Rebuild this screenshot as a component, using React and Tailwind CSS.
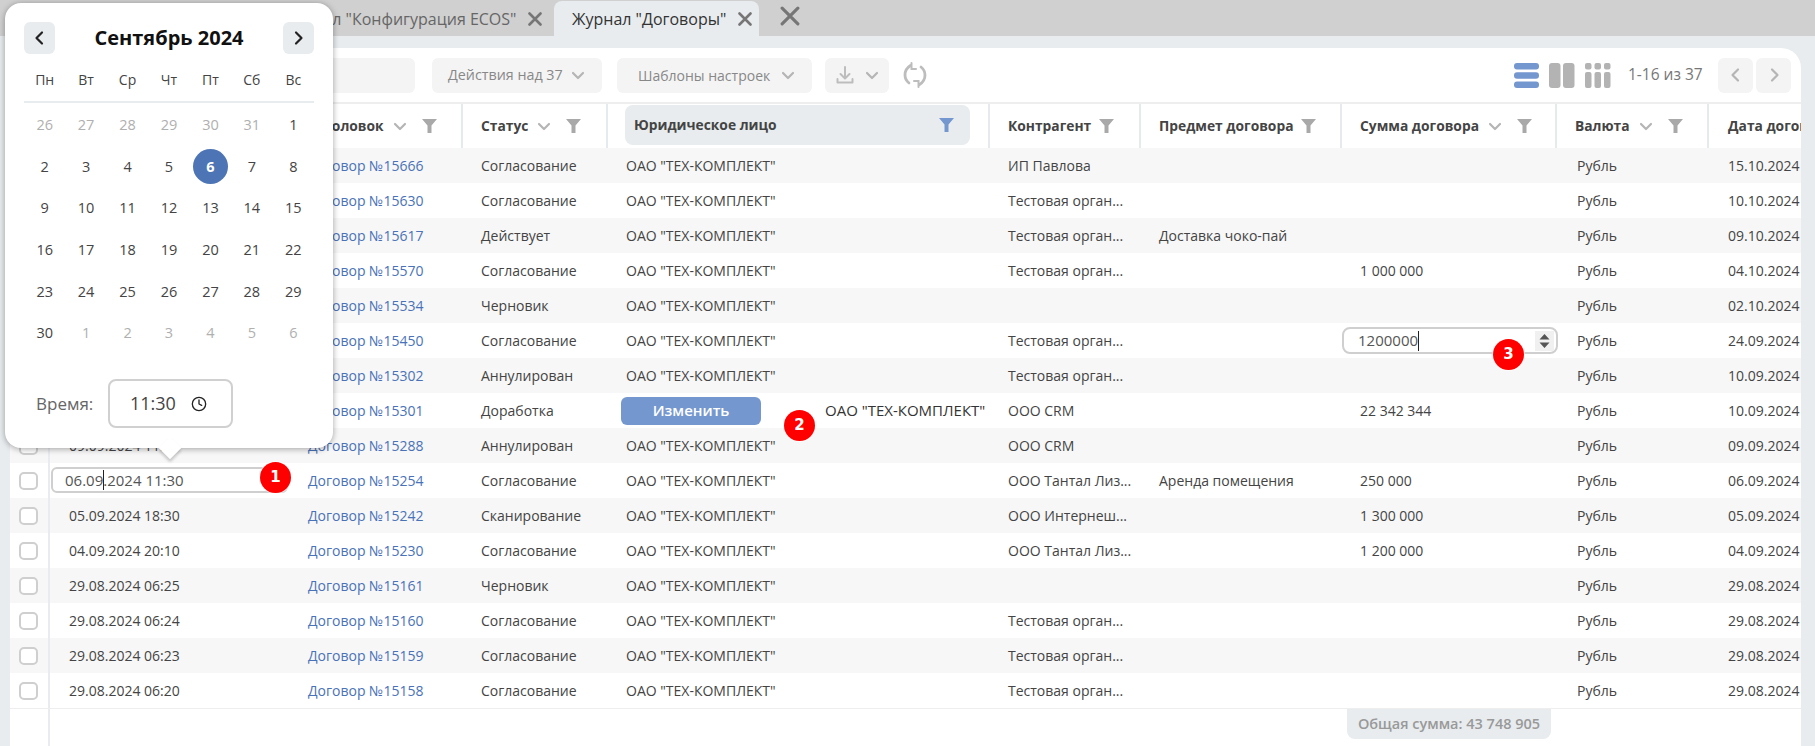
import { Clock } from 'lucide-react';

const COLS = 'grid grid-cols-[40px_238px_173px_145px_382px_151px_201px_215px_152px_1fr]';

const ROWS = [
  { date: '15.10.2024 10:42', no: '15666', status: 'Согласование', agent: 'ИП Павлова', topic: '', sum: '', end: '15.10.2024' },
  { date: '10.10.2024 12:05', no: '15630', status: 'Согласование', agent: 'Тестовая орган...', topic: '', sum: '', end: '10.10.2024' },
  { date: '09.10.2024 16:20', no: '15617', status: 'Действует', agent: 'Тестовая орган...', topic: 'Доставка чоко-пай', sum: '', end: '09.10.2024' },
  { date: '04.10.2024 09:15', no: '15570', status: 'Согласование', agent: 'Тестовая орган...', topic: '', sum: '1 000 000', end: '04.10.2024' },
  { date: '02.10.2024 14:30', no: '15534', status: 'Черновик', agent: '', topic: '', sum: '', end: '02.10.2024' },
  { date: '24.09.2024 11:10', no: '15450', status: 'Согласование', agent: 'Тестовая орган...', topic: '', sum: 'edit', end: '24.09.2024' },
  { date: '10.09.2024 17:45', no: '15302', status: 'Аннулирован', agent: 'Тестовая орган...', topic: '', sum: '', end: '10.09.2024' },
  { date: '10.09.2024 13:25', no: '15301', status: 'Доработка', agent: 'ООО CRM', topic: '', sum: '22 342 344', end: '10.09.2024', change: true },
  { date: '09.09.2024 11:00', no: '15288', status: 'Аннулирован', agent: 'ООО CRM', topic: '', sum: '', end: '09.09.2024' },
  { date: 'edit', no: '15254', status: 'Согласование', agent: 'ООО Тантал Лиз...', topic: 'Аренда помещения', sum: '250 000', end: '06.09.2024' },
  { date: '05.09.2024 18:30', no: '15242', status: 'Сканирование', agent: 'ООО Интернеш...', topic: '', sum: '1 300 000', end: '05.09.2024' },
  { date: '04.09.2024 20:10', no: '15230', status: 'Согласование', agent: 'ООО Тантал Лиз...', topic: '', sum: '1 200 000', end: '04.09.2024' },
  { date: '29.08.2024 06:25', no: '15161', status: 'Черновик', agent: '', topic: '', sum: '', end: '29.08.2024' },
  { date: '29.08.2024 06:24', no: '15160', status: 'Согласование', agent: 'Тестовая орган...', topic: '', sum: '', end: '29.08.2024' },
  { date: '29.08.2024 06:23', no: '15159', status: 'Согласование', agent: 'Тестовая орган...', topic: '', sum: '', end: '29.08.2024' },
  { date: '29.08.2024 06:20', no: '15158', status: 'Согласование', agent: 'Тестовая орган...', topic: '', sum: '', end: '29.08.2024' },
];

const WEEKS = [
  [26, 27, 28, 29, 30, 31, 1],
  [2, 3, 4, 5, 6, 7, 8],
  [9, 10, 11, 12, 13, 14, 15],
  [16, 17, 18, 19, 20, 21, 22],
  [23, 24, 25, 26, 27, 28, 29],
  [30, 1, 2, 3, 4, 5, 6],
];

function Chevron({ className = '', size = 16, color = '#b5b5b5', dir = 'down' }) {
  const d = { down: 'M3 6l5 5 5-5', left: 'M10 2.5L4.5 8l5.5 5.5', right: 'M6 2.5L11.5 8 6 13.5' }[dir];
  return (
    <svg width={size} height={size} viewBox="0 0 16 16" fill="none" className={className}>
      <path d={d} stroke={color} strokeWidth="2.2" strokeLinecap="round" strokeLinejoin="round" />
    </svg>
  );
}

function Funnel({ color = '#a9a9a9', className = '' }) {
  return (
    <svg width="15" height="14" viewBox="0 0 15 14" className={className}>
      <path d="M0 0h15L9.5 6.5V14h-4V6.5z" fill={color} />
    </svg>
  );
}

function Cross({ size = 14, width = 2.6, color = '#767676' }) {
  return (
    <svg width={size} height={size} viewBox="0 0 14 14" fill="none">
      <path d="M1.5 1.5l11 11M12.5 1.5l-11 11" stroke={color} strokeWidth={width} strokeLinecap="round" />
    </svg>
  );
}

function Badge({ n, className }) {
  return (
    <span className={`absolute z-10 flex h-[31px] w-[31px] items-center justify-center rounded-full bg-[#f00] font-['DejaVu_Sans',sans-serif] text-[15px] font-bold text-white shadow-[0_0_0_1px_rgba(255,255,255,0.5)] ${className}`}>
      {n}
    </span>
  );
}

function HeadCell({ label, sort = true, funnel = true, first = false }) {
  return (
    <div className={`flex h-[44px] items-center whitespace-nowrap pl-[18px] text-[13.8px] font-bold text-[#444] ${first ? '' : 'border-l-2 border-[#e4eaee]'}`}>
      <span>{label}</span>
      {sort && <Chevron className="ml-2" />}
      {funnel && <Funnel className={sort ? 'ml-[14px]' : 'ml-2'} />}
    </div>
  );
}

function Row({ row, index }) {
  const bg = index % 2 === 0 ? 'bg-[#f7f7f7]' : 'bg-white';
  return (
    <div className={`${COLS} h-[35px] items-center text-[14px] text-[#444] ${bg}`}>
      <div className="flex h-full items-center border-r-2 border-[#e8ecef] pl-[9px]">
        <span className="h-[18px] w-[19px] rounded-[5px] border-2 border-[#cfcfcf] bg-white" />
      </div>
      {row.date === 'edit' ? (
        <div className="relative h-full">
          <div className="mt-[4px] ml-px flex h-[26px] w-[237px] items-center rounded-md border-2 border-[#cfcfcf] bg-white pl-[12px] text-[15px] text-[#555]">
            06.09<span className="mx-[-0.5px] h-[20px] w-px bg-[#222]" />.2024 11:30
          </div>
          <Badge n="1" className="left-[210px] top-[-1px]" />
        </div>
      ) : (
        <div className="pl-[19px]">{row.date}</div>
      )}
      <div className="pl-5 text-[#4a72b8]">Договор №{row.no}</div>
      <div className="pl-5 whitespace-nowrap">{row.status}</div>
      {row.change ? (
        <div className="relative flex h-full items-center pl-[15px]">
          <button className="h-[28px] w-[140px] rounded-md bg-[#7597cf] text-[15px] font-semibold text-white">Изменить</button>
          <span className="ml-[64px] mt-[-1px] whitespace-nowrap text-[15px] text-[#333]">ОАО "ТЕХ-КОМПЛЕКТ"</span>
          <Badge n="2" className="left-[178px] top-[17px]" />
        </div>
      ) : (
        <div className="pl-5">ОАО "ТЕХ-КОМПЛЕКТ"</div>
      )}
      <div className="pl-5 whitespace-nowrap">{row.agent}</div>
      <div className="pl-5 whitespace-nowrap">{row.topic}</div>
      {row.sum === 'edit' ? (
        <div className="relative h-full">
          <div className="mt-[4px] ml-[2px] flex h-[27px] w-[216px] items-center justify-between rounded-lg border-2 border-[#cfcfcf] bg-white pl-[14px] pr-[2px] text-[15px] text-[#555]">
            <span className="flex items-center">1200000<span className="h-[20px] w-px bg-[#222]" /></span>
            <svg width="19" height="20" viewBox="0 0 19 20" className="bg-[#f0f0f0]">
              <path d="M9.5 3l5 5.5h-10zM9.5 17l5-5.5h-10z" fill="#555" />
            </svg>
          </div>
          <Badge n="3" className="left-[153px] top-[16px]" />
        </div>
      ) : (
        <div className="pl-5">{row.sum}</div>
      )}
      <div className="pl-[22px]">Рубль</div>
      <div className="overflow-hidden pl-[21px] whitespace-nowrap">{row.end}</div>
    </div>
  );
}

function Calendar() {
  return (
    <div className="absolute left-[5px] top-[3px] z-20 h-[445px] w-[328px] rounded-2xl bg-white px-[19px] pt-[19px] shadow-[0_1px_6px_rgba(0,0,0,0.35)]">
      <div className="flex items-center justify-between">
        <button className="flex h-[32px] w-[31px] items-center justify-center rounded-md bg-[#e8ecef]">
          <Chevron dir="left" color="#222" />
        </button>
        <span className="text-[20px] font-bold text-[#111]">Сентябрь 2024</span>
        <button className="flex h-[32px] w-[31px] items-center justify-center rounded-md bg-[#e8ecef]">
          <Chevron dir="right" color="#222" />
        </button>
      </div>
      <div className="mt-[16px] grid h-[33px] grid-cols-7 border-b-2 border-[#e8ecef] pb-[8px] text-center text-[14px] leading-[20px] text-[#444]">
        {['Пн', 'Вт', 'Ср', 'Чт', 'Пт', 'Сб', 'Вс'].map(d => <span key={d}>{d}</span>)}
      </div>
      <div className="mt-[1px]">
        {WEEKS.map((week, w) => (
          <div key={w} className="grid h-[41.7px] grid-cols-7 place-items-center text-[14.5px] text-[#444]">
            {week.map((d, i) => {
              const muted = (w === 0 && d > 1) || (w === 5 && d < 30);
              if (w === 1 && d === 6) {
                return <span key={i} className="flex h-[35px] w-[35px] items-center justify-center rounded-full bg-[#4d74b5] font-bold text-white">{d}</span>;
              }
              return <span key={i} className={muted ? 'text-[#b0b0b0]' : ''}>{d}</span>;
            })}
          </div>
        ))}
      </div>
      <div className="mt-[25px] flex items-center pl-[12px]">
        <span className="w-[72px] text-[17px] text-[#666]">Время:</span>
        <div className="flex h-[49px] w-[125px] items-center rounded-lg border-2 border-[#d0d0d0] pl-[20px] text-[18px] text-[#444]">
          11:30
          <Clock size={16} strokeWidth={2} color="#222" className="ml-[15px]" />
        </div>
      </div>
      {/* хвостик */}
      <div className="absolute bottom-[-8px] left-[157px] h-[16px] w-[16px] rotate-45 bg-white shadow-[2px_2px_3px_rgba(0,0,0,0.2)]" />
    </div>
  );
}

function Toolbar() {
  return (
    <div className="flex h-[56px] items-center border-b-2 border-[#eeeeee] pl-[40px] pr-[10px] text-[14px] text-[#888]">
      <div className="h-[35px] w-[365px] rounded-md bg-[#f4f4f4]" />
      <div className="ml-[17px] flex h-[35px] w-[170px] items-center rounded-md bg-[#f4f4f4] pl-[16px] text-[14.3px]">
        Действия над 37
        <Chevron className="ml-[7px]" />
      </div>
      <div className="ml-[15px] flex h-[35px] w-[195px] items-center rounded-md bg-[#f4f4f4] pl-[21px]">
        Шаблоны настроек
        <Chevron className="ml-[10px]" />
      </div>
      <div className="ml-[13px] flex h-[35px] w-[64px] items-center rounded-md bg-[#f4f4f4] pl-[10px]">
        <svg width="20" height="20" viewBox="0 0 20 20" fill="none" stroke="#bdbdbd" strokeWidth="2" strokeLinecap="round" strokeLinejoin="round">
          <path d="M10 2v11M5.500 9l4.500 4.500L14.500 9M2.500 14v3.500h15V14" />
        </svg>
        <Chevron className="ml-[9px]" />
      </div>
      <svg width="26" height="26" viewBox="0 0 26 26" fill="none" className="ml-[13px]" stroke="#bdbdbd" strokeWidth="2.800" strokeLinecap="round">
        <path d="M8.500 3.500C4.500 6 3 9.500 3 13c0 3.500 1.500 6 4 8" />
        <path d="M17.500 22.500c4-2.500 5.500-6 5.500-9.500 0-3.500-1.500-6-4-8" />
        <path d="M9.500 1v6H14M16.500 25v-6H12" strokeWidth="2" />
      </svg>

      <div className="ml-auto flex items-center">
        <svg width="25" height="25" viewBox="0 0 25 25" fill="#7597cf">
          <rect width="25" height="6.500" rx="3" />
          <rect y="9.300" width="25" height="6.500" rx="3" />
          <rect y="18.500" width="25" height="6.500" rx="3" />
        </svg>
        <svg width="26" height="25" viewBox="0 0 26 25" fill="#b3b3b3" className="ml-[10px]">
          <rect width="11.500" height="25" rx="3" />
          <rect x="14" width="11.500" height="25" rx="3" />
        </svg>
        <svg width="26" height="25" viewBox="0 0 26 25" fill="#b3b3b3" className="ml-[10px]">
          <rect width="6.500" height="6.500" rx="2" />
          <rect x="9.500" width="6.500" height="6.500" rx="2" />
          <rect x="19" width="6.500" height="6.500" rx="2" />
          <rect y="9" width="6.500" height="16" rx="2" />
          <rect x="9.500" y="9" width="6.500" height="16" rx="2" />
          <rect x="19" y="9" width="6.500" height="16" rx="2" />
        </svg>
        <span className="ml-[17px] w-[90px] text-[15.500px] text-[#777]">1-16 из 37</span>
        <button className="flex h-[35px] w-[35px] items-center justify-center rounded-md bg-[#f4f4f4]">
          <Chevron dir="left" />
        </button>
        <button className="ml-[3px] flex h-[35px] w-[35px] items-center justify-center rounded-md bg-[#f4f4f4]">
          <Chevron dir="right" />
        </button>
      </div>
    </div>
  );
}

export default function App() {
  return (
    <div className="relative h-[746px] w-[1815px] overflow-hidden bg-[#e8ecef] font-['Open_Sans',sans-serif]">
      {/* Tabs */}
      <div className="flex h-[36px] items-end bg-[#d0d0d0] pl-[282px] text-[16px]">
        <div className="flex h-[35px] w-[272px] items-center text-[#666]">
          <span className="whitespace-nowrap">Журнал "Конфигурация ECOS"</span>
          <span className="ml-[12px]"><Cross /></span>
        </div>
        <div className="flex h-[35px] w-[205px] items-center rounded-t-lg bg-[#e8ecef] pl-[18px] text-[#333]">
          <span className="whitespace-nowrap">Журнал "Договоры"</span>
          <span className="ml-[12px]"><Cross /></span>
        </div>
        <span className="mb-[10px] ml-[21px]"><Cross size={20} width={2.2} /></span>
      </div>

      {/* Card */}
      <div className="ml-[10px] mt-[12px] h-[698px] w-[1791px] overflow-hidden rounded-tr-[20px] rounded-tl-[20px] bg-white">
        <Toolbar />
        <div className={COLS}>
          <div className="border-r-2 border-[#e8ecef]" />
          <HeadCell label="Дата создания" first />
          <HeadCell label="Заголовок" />
          <HeadCell label="Статус" />
          <div className="flex h-[44px] items-start border-l-2 border-[#e4eaee] pl-[17px] pt-px">
            <div className="flex h-[40px] w-[345px] items-center justify-between rounded-lg bg-[#e8ecef] pl-[9px] pr-[16px] text-[13.8px] font-bold text-[#444]">
              Юридическое лицо
              <Funnel color="#7597cf" />
            </div>
          </div>
          <HeadCell label="Контрагент" sort={false} />
          <HeadCell label="Предмет договора" sort={false} />
          <HeadCell label="Сумма договора" />
          <HeadCell label="Валюта" />
          <div className="flex h-[44px] items-center overflow-hidden whitespace-nowrap border-l-2 border-[#e4eaee] pl-[19px] text-[13.8px] font-bold text-[#444]">Дата договора</div>
        </div>
        {ROWS.map((row, i) => <Row key={row.no} row={row} index={i} />)}
        {/* Footer */}
        <div className="flex h-[40px] border-t border-[#eeeeee]">
          <div className="w-[40px] border-r-2 border-[#e8ecef]" />
          <div className="ml-[1297px] flex h-[30px] w-[204px] items-center justify-center rounded-b-lg bg-[#e8ecef] text-[14.500px] font-semibold text-[#999]">
            Общая сумма: 43 748 905
          </div>
        </div>
        <div className="h-full w-[40px] border-r-2 border-[#e8ecef]" />
      </div>

      <Calendar />
    </div>
  );
}
